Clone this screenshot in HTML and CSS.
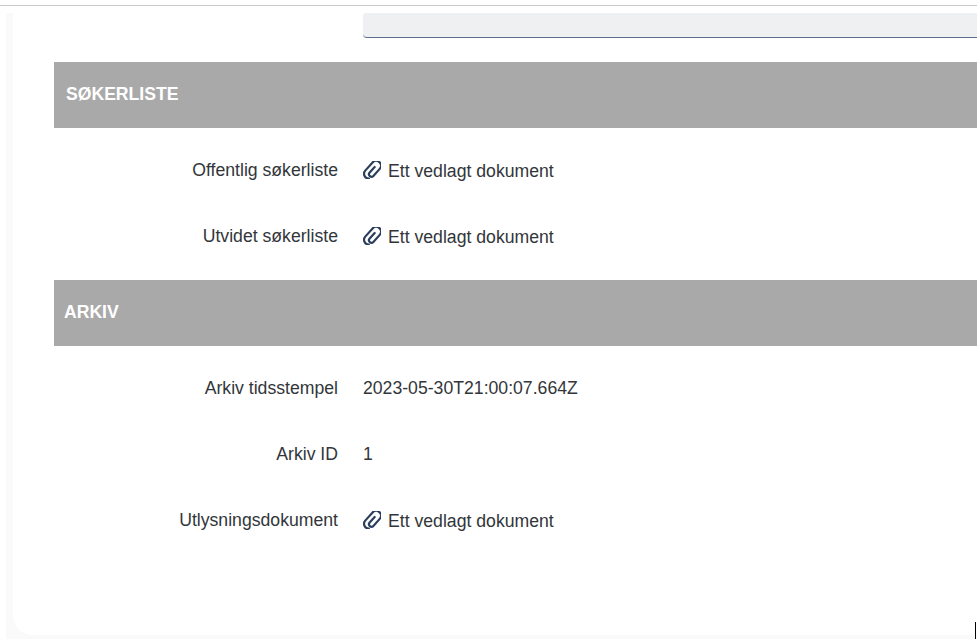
FILE: index.html
```html
<!DOCTYPE html>
<html lang="nb">
<head>
  <meta charset="UTF-8">
  <title>Utlysning</title>
  <link rel="stylesheet" href="styles.css">
</head>
<body>
  <svg width="0" height="0" class="defs">
    <symbol id="clip" viewBox="3 3 18 18">
      <path transform="rotate(42 12 12)" d="M12 8V15.500a2.500 2.500 0 0 0 5 0V6a4.800 4.800 0 0 0-9.600 0V17a4.800 4.800 0 0 0 8 3.500" fill="none" stroke="currentColor" stroke-width="2.200" stroke-linecap="round" stroke-linejoin="round"/>
    </symbol>
  </svg>

  <div class="topline"></div>
  <div class="shell">
    <div class="card">
      <div class="search"></div>

      <div class="section-head first">SØKERLISTE</div>
      <div class="row">
        <label>Offentlig søkerliste</label>
        <div class="value"><svg class="clip"><use href="#clip"/></svg>Ett vedlagt dokument</div>
      </div>
      <div class="row">
        <label>Utvidet søkerliste</label>
        <div class="value"><svg class="clip"><use href="#clip"/></svg>Ett vedlagt dokument</div>
      </div>

      <div class="section-head second">ARKIV</div>
      <div class="row">
        <label>Arkiv tidsstempel</label>
        <div class="value plain">2023-05-30T21:00:07.664Z</div>
      </div>
      <div class="row">
        <label>Arkiv ID</label>
        <div class="value plain">1</div>
      </div>
      <div class="row">
        <label>Utlysningsdokument</label>
        <div class="value"><svg class="clip"><use href="#clip"/></svg>Ett vedlagt dokument</div>
      </div>
    </div>
  </div>
  <div class="cursor"></div>
</body>
</html>
```

FILE: styles.css
```css
html, body {
  margin: 0;
  height: 100%;
  overflow: hidden;
}

body {
  font-family: 'Liberation Sans', Arial, sans-serif;
  background-color: #fff;
  color: #32363a;
  padding-top: 5px;
  box-sizing: border-box;
  position: relative;
}

.defs {
  position: absolute;
}

.topline {
  height: 1px;
  background-color: #c8c8c8;
}

.shell {
  margin: 7px 0 0 6px;
  padding: 0 0 4px 7px;
  background-color: #fafafa;
}

.card {
  height: 622px;
  box-sizing: border-box;
  background-color: #fff;
  border-bottom-left-radius: 20px;
}

.search {
  height: 24px;
  margin-left: 350px;
  background-color: #eff0f2;
  border-bottom: 1px solid #5a6f8c;
  border-radius: 3px 0 0 4px;
}

.section-head {
  height: 66px;
  margin: 0 0 10px 41px;
  background-color: #a9a9a9;
  color: #fff;
  font-size: 17.6px;
  font-weight: bold;
  line-height: 65px;
}

.section-head.first {
  margin-top: 24px;
  padding-left: 12px;
}

.section-head.second {
  margin-top: 10px;
  padding-left: 10px;
}

.row {
  display: grid;
  grid-template-columns: 284px 1fr;
  column-gap: 25px;
  height: 66px;
  margin-left: 41px;
  align-items: center;
  font-size: 17.65px;
}

.row label {
  text-align: right;
  padding-bottom: 2px;
}

.value {
  display: flex;
  align-items: center;
}

.value.plain {
  padding-bottom: 2px;
}

.clip {
  width: 18px;
  height: 18px;
  margin: -2px 7px 0 0;
  color: #2b3f5c;
}

.cursor {
  position: absolute;
  right: 1px;
  bottom: 0;
  width: 1px;
  height: 17px;
  background-color: #000;
}
```
